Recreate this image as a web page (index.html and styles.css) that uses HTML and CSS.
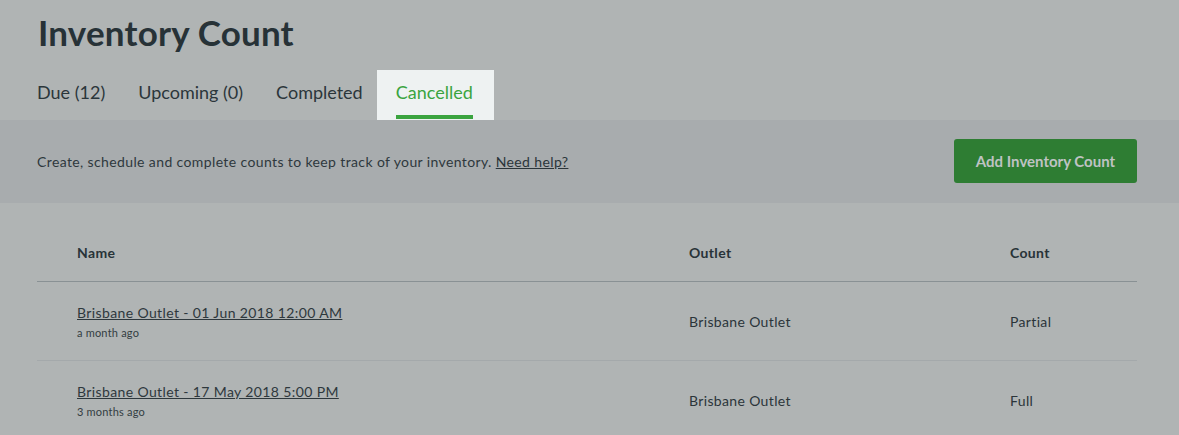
FILE: index.html
```html
<!DOCTYPE html>
<html>
<head>
<meta charset="utf-8">
<link rel="stylesheet" href="styles.css">
</head>
<body>
<div class="page">
  <header class="head">
    <h1 class="title">Inventory Count</h1>
    <nav class="tabs">
      <a class="tab"><span class="tab-label">Due (12)</span></a>
      <a class="tab"><span class="tab-label">Upcoming (0)</span></a>
      <a class="tab"><span class="tab-label">Completed</span></a>
      <a class="tab tab-active"><span class="tab-label">Cancelled</span></a>
    </nav>
  </header>
  <section class="banner">
    <p class="banner-text">Create, schedule and complete counts to keep track of your inventory. <a class="help">Need help?</a></p>
    <button class="btn">Add Inventory Count</button>
  </section>
  <section class="content">
    <div class="table">
      <div class="row row-head">
        <div class="cell c-name">Name</div>
        <div class="cell c-outlet">Outlet</div>
        <div class="cell c-count">Count</div>
      </div>
      <div class="row">
        <div class="cell c-name">
          <a class="link">Brisbane Outlet - 01 Jun 2018 12:00 AM</a>
          <div class="sub">a month ago</div>
        </div>
        <div class="cell c-outlet">Brisbane Outlet</div>
        <div class="cell c-count">Partial</div>
      </div>
      <div class="row">
        <div class="cell c-name">
          <a class="link">Brisbane Outlet - 17 May 2018 5:00 PM</a>
          <div class="sub">3 months ago</div>
        </div>
        <div class="cell c-outlet">Brisbane Outlet</div>
        <div class="cell c-count">Full</div>
      </div>
    </div>
  </section>
</div>
</body>
</html>
```

FILE: styles.css
```css
* { box-sizing: border-box; }
html, body {
  margin: 0;
  padding: 0;
  background: #b0b4b4;
  font-family: Lato, "Noto Sans", sans-serif;
  color: #2b353a;
}
.page { width: 1179px; }
.head { padding: 0 42px 0 38px; }
.title {
  margin: 0;
  padding-top: 9px;
  height: 66px;
  font-size: 35px;
  line-height: 46px;
  font-weight: 700;
  color: #273237;
  letter-spacing: 0.2px;
}
.tabs {
  display: flex;
  margin-left: -18px;
  margin-top: 4px;
  height: 50px;
}
.tab {
  display: flex;
  align-items: stretch;
  padding: 0 16px 1px 17px;
  font-size: 18px;
  color: #2b363b;
}
.tab-label {
  display: flex;
  align-items: center;
  border-bottom: 4px solid transparent;
  padding-top: 0;
  padding-bottom: 2px;
}
.tab-active {
  background: #eef2f2;
  color: #3aa43f;
  padding: 0 21px 1px 19px;
  margin-left: -2px;
}
.tab-active .tab-label { border-bottom-color: #3aa43f; }
.banner {
  display: flex;
  align-items: center;
  justify-content: space-between;
  height: 83px;
  background: #a8acae;
  padding: 0 42px 1px 37px;
}
.banner-text {
  margin: 0;
  font-size: 14px;
  letter-spacing: 0.38px;
  color: #2e383d;
}
.help {
  color: #2b353a;
  text-decoration: underline;
}
.btn {
  width: 183px;
  height: 44px;
  border: none;
  border-radius: 3px;
  background: #2e7d33;
  color: #bfc3c3;
  font-family: Lato, "Noto Sans", sans-serif;
  font-size: 15px;
  font-weight: 700;
  padding: 0;
}
.content { padding: 0 42px 0 37px; }
.row {
  display: flex;
  align-items: center;
  height: 79px;
  border-bottom: 1px solid #a4a9ab;
}
.row-head {
  height: 79px;
  padding-top: 20px;
  border-bottom-color: #899194;
  font-weight: 700;
  font-size: 14px;
  color: #283338;
}
.cell { font-size: 14px; letter-spacing: 0.35px; }
.c-name { width: 652px; padding-left: 40px; }
.c-outlet { width: 321px; }
.c-count { flex: 1; }
.link {
  display: block;
  color: #2e383d;
  text-decoration: underline;
  font-size: 14px;
  line-height: 18px;
  letter-spacing: 0.38px;
}
.sub {
  font-size: 11px;
  margin-top: 4px;
  letter-spacing: 0.2px;
  color: #333d42;
}
```
